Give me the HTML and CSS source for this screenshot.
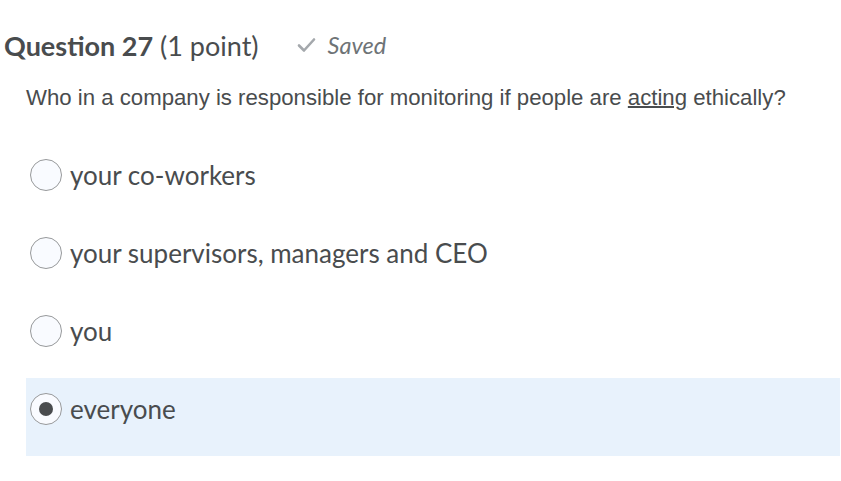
FILE: index.html
```html
<!DOCTYPE html>
<html lang="en">
<head>
    <meta charset="UTF-8">
    <meta name="viewport" content="width=device-width, initial-scale=1.0">
    <title>Question 27</title>
    <link rel="stylesheet" href="styles.css">
</head>
<body>
    <div class="quiz">
        <div class="question-header">
            <h2 class="question-title"><strong>Question 27</strong> (1 point)</h2>
            <span class="saved">
                <svg width="19" height="16" viewBox="0 0 19 16">
                    <path d="M2 8.5 L7 13.5 L17 2.5" fill="none" stroke="#a4a8ac" stroke-width="2.6" stroke-linecap="round" stroke-linejoin="round"/>
                </svg>
                <em>Saved</em>
            </span>
        </div>
        <p class="question-text">Who in a company is responsible for monitoring if people are <u>acting</u> ethically?</p>
        <div class="options">
            <label class="option">
                <input type="radio" name="q27">
                <span class="radio"></span>
                <span class="option-text">your co-workers</span>
            </label>
            <label class="option">
                <input type="radio" name="q27">
                <span class="radio"></span>
                <span class="option-text">your supervisors, managers and CEO</span>
            </label>
            <label class="option">
                <input type="radio" name="q27">
                <span class="radio"></span>
                <span class="option-text">you</span>
            </label>
            <label class="option selected">
                <input type="radio" name="q27" checked>
                <span class="radio"></span>
                <span class="option-text">everyone</span>
            </label>
        </div>
    </div>
</body>
</html>
```

FILE: styles.css
```css
body {
    margin: 0;
    background-color: #ffffff;
    color: #494c4e;
    font-family: Lato, "Open Sans", sans-serif;
}
.quiz {
    padding: 0 1px 0 4px;
}
.question-header {
    display: flex;
    align-items: center;
    gap: 38px;
    height: 44px;
    margin-top: 23px;
}
.question-title {
    margin: 0;
    font-size: 27px;
    font-weight: normal;
}
.question-title strong {
    font-weight: bold;
}
.saved {
    display: flex;
    align-items: center;
    gap: 12px;
    color: #6e7376;
    font-size: 23.5px;
}
.question-text {
    margin: 19px 0 0 22px;
    font-family: "Liberation Sans", Arial, sans-serif;
    font-size: 22.2px;
    line-height: 24px;
}
.question-text u {
    text-decoration-thickness: 2px;
}
.options {
    margin: 34px 0 0 22px;
}
.option {
    display: flex;
    align-items: center;
    gap: 8px;
    height: 32px;
    padding: 15px 0 31px 4px;
    cursor: pointer;
}
.option input {
    display: none;
}
.radio {
    width: 30px;
    height: 30px;
    border: 1px solid #97999b;
    border-radius: 50%;
    background-color: #f9fbff;
    display: flex;
    align-items: center;
    justify-content: center;
}
.option input:checked + .radio:before {
    content: "";
    width: 14px;
    height: 14px;
    border-radius: 50%;
    background-color: #494c4e;
}
.option-text {
    font-size: 26px;
}
.option.selected {
    background-color: #e8f2fc;
}
```
